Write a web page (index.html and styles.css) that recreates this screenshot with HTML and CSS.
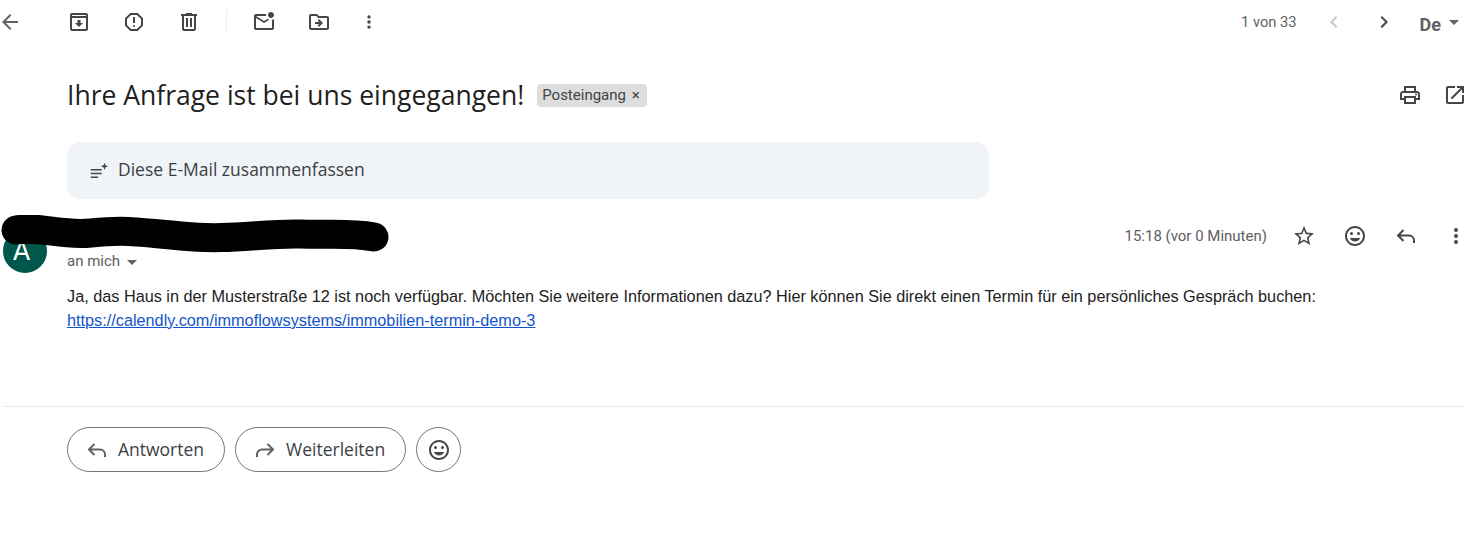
FILE: index.html
```html
<!DOCTYPE html>
<html lang="de">
<head>
  <title>Ihre Anfrage ist bei uns eingegangen!</title>
  <meta charset="UTF-8">
  <meta name="viewport" content="width=device-width, initial-scale=1.0">
  <link rel="stylesheet" href="styles.css">
</head>
<body>
  <div class="toolbar">
    <svg class="icon back-icon" viewBox="0 0 24 24"><path d="M20 11H7.83l5.59-5.59L12 4l-8 8 8 8 1.41-1.41L7.83 13H20v-2z"/></svg>
    <div class="tool-group">
      <svg class="icon" viewBox="0 0 24 24"><path d="M5 3h14a2 2 0 0 1 2 2v14a2 2 0 0 1-2 2H5a2 2 0 0 1-2-2V5a2 2 0 0 1 2-2zm0 5v11h14V8H5zm0-3v1h14V5H5zm5.5 5h3v3H16l-4 4-4-4h2.5v-3z"/></svg>
      <svg class="icon" viewBox="0 0 24 24"><path d="M15.73 3H8.27L3 8.27v7.46L8.27 21h7.46L21 15.73V8.27L15.73 3zM19 14.9L14.9 19H9.1L5 14.9V9.1L9.1 5h5.8L19 9.1v5.8z"/><path d="M11 7h2v6h-2z"/><circle cx="12" cy="16" r="1"/></svg>
      <svg class="icon" viewBox="0 0 24 24"><path d="M15 4V3H9v1H4v2h1v13c0 1.1.9 2 2 2h10c1.1 0 2-.9 2-2V6h1V4h-5zm2 15H7V6h10v13zM9 8h2v9H9zm4 0h2v9h-2z"/></svg>
    </div>
    <div class="tool-divider"></div>
    <div class="tool-group">
      <svg class="icon" viewBox="0 0 24 24"><path d="M22 8.98V18c0 1.1-.9 2-2 2H4c-1.1 0-2-.9-2-2V6c0-1.1.9-2 2-2h10.1c-.06.32-.1.66-.1 1s.04.68.1 1H4l8 5 3.67-2.29c.47.43 1.02.76 1.63.98L12 13 4 8v10h16V9.9c.74-.15 1.42-.48 2-.92zM16 5c0 1.66 1.34 3 3 3s3-1.34 3-3-1.34-3-3-3-3 1.34-3 3z"/></svg>
      <svg class="icon" viewBox="0 0 24 24"><path d="M20 6h-8l-2-2H4c-1.1 0-1.99.9-1.99 2L2 18c0 1.1.9 2 2 2h16c1.1 0 2-.9 2-2V8c0-1.1-.9-2-2-2zm0 12H4V6h5.17l2 2H20v10zm-8.01-9l-1.41 1.41L12.16 12H8v2h4.16l-1.59 1.59L11.99 17 16 13.01 11.99 9z"/></svg>
      <svg class="icon more-icon" viewBox="0 0 24 24"><circle cx="12" cy="6" r="2"/><circle cx="12" cy="12" r="2"/><circle cx="12" cy="18" r="2"/></svg>
    </div>
    <div class="pager">
      <span class="pager-count">1 von 33</span>
      <svg class="icon chevron disabled" viewBox="0 0 24 24"><path d="M15.41 7.41L14 6l-6 6 6 6 1.41-1.41L10.83 12z"/></svg>
      <svg class="icon chevron" viewBox="0 0 24 24"><path d="M10 6L8.59 7.41 13.17 12l-4.58 4.59L10 18l6-6z"/></svg>
      <span class="lang">De</span>
      <span class="caret lang-caret"></span>
    </div>
  </div>

  <div class="subject-row">
    <h1 class="subject">Ihre Anfrage ist bei uns eingegangen!</h1>
    <span class="label-chip">Posteingang <span class="chip-close">×</span></span>
    <div class="subject-actions">
      <svg class="icon" viewBox="0 0 24 24"><path d="M19 8h-1V3H6v5H5c-1.66 0-3 1.34-3 3v6h4v4h12v-4h4v-6c0-1.66-1.34-3-3-3zM8 5h8v3H8V5zm8 14H8v-4h8v4zm2-4v-2H6v2H4v-4c0-.55.45-1 1-1h14c.55 0 1 .45 1 1v4h-2z"/><circle cx="18" cy="11.5" r="1"/></svg>
      <svg class="icon" viewBox="0 0 24 24"><path d="M19 19H5V5h7V3H5c-1.11 0-2 .9-2 2v14c0 1.1.89 2 2 2h14c1.1 0 2-.9 2-2v-7h-2v7zM14 3v2h3.59l-9.83 9.83 1.41 1.41L19 6.41V10h2V3h-7z"/></svg>
    </div>
  </div>

  <div class="summary-bar">
    <svg class="icon summary-icon" viewBox="0 0 24 24"><path d="M3 11h12v1.6H3zM3 15h12v1.6H3zM3 19h8v1.6H3z"/><path d="M18 4l1.1 2.9L22 8l-2.9 1.1L18 12l-1.1-2.9L14 8l2.9-1.1z"/></svg>
    <span class="summary-text">Diese E-Mail zusammenfassen</span>
  </div>

  <div class="message">
    <div class="avatar">A</div>
    <div class="message-main">
      <div class="message-head">
        <div class="recipient">an mich <span class="caret"></span></div>
        <div class="message-meta">
          <span class="message-time">15:18 (vor 0 Minuten)</span>
          <svg class="icon meta-icon" viewBox="0 0 24 24"><path d="M22 9.24l-7.19-.62L12 2 9.19 8.63 2 9.24l5.46 4.73L5.82 21 12 17.27 18.18 21l-1.63-7.03L22 9.24zM12 15.4l-3.76 2.27 1-4.28-3.32-2.88 4.38-.38L12 6.1l1.71 4.04 4.38.38-3.32 2.88 1 4.28L12 15.4z"/></svg>
          <svg class="icon meta-icon" viewBox="0 0 24 24"><path d="M11.99 2C6.47 2 2 6.48 2 12s4.47 10 9.99 10C17.52 22 22 17.52 22 12S17.52 2 11.99 2zM12 20c-4.42 0-8-3.58-8-8s3.58-8 8-8 8 3.58 8 8-3.58 8-8 8z"/><circle cx="15.5" cy="9.5" r="1.5"/><circle cx="8.5" cy="9.5" r="1.5"/><path d="M12 17.5c2.33 0 4.3-1.46 5.11-3.5H6.89c.8 2.04 2.78 3.5 5.11 3.5z"/></svg>
          <svg class="icon meta-icon line-icon" viewBox="0 0 24 24"><path d="M9.5 6L4 11.5 9.5 17M4 11.5h11a5 5 0 0 1 5 5V19"/></svg>
          <svg class="icon meta-icon meta-more" viewBox="0 0 24 24"><circle cx="12" cy="6" r="2"/><circle cx="12" cy="12" r="2"/><circle cx="12" cy="18" r="2"/></svg>
        </div>
      </div>
      <div class="message-body">
        Ja, das Haus in der Musterstraße 12 ist noch verfügbar. Möchten Sie weitere Informationen dazu? Hier können Sie direkt einen Termin für ein persönliches Gespräch buchen:<br>
        <a href="#">https://calendly.com/immoflowsystems/immobilien-termin-demo-3</a>
      </div>
    </div>
    <!-- black scribble over the sender name -->
    <svg class="scribble" viewBox="0 0 392 40"><path d="M15 15C40 11 60 21 90 18S130 16 180 21 260 18 300 19 350 18 373 22"/></svg>
  </div>

  <div class="message-end"></div>

  <div class="reply-row">
    <button class="pill-btn">
      <svg class="icon line-icon" viewBox="0 0 24 24"><path d="M9.5 6L4 11.5 9.5 17M4 11.5h11a5 5 0 0 1 5 5V19"/></svg>
      <span class="btn-text">Antworten</span>
    </button>
    <button class="pill-btn">
      <svg class="icon line-icon" viewBox="0 0 24 24"><path d="M14.5 6L20 11.5 14.5 17M20 11.5H9a5 5 0 0 0-5 5V19"/></svg>
      <span class="btn-text">Weiterleiten</span>
    </button>
    <button class="round-btn">
      <svg class="icon" viewBox="0 0 24 24"><path d="M11.99 2C6.47 2 2 6.48 2 12s4.47 10 9.99 10C17.52 22 22 17.52 22 12S17.52 2 11.99 2zM12 20c-4.42 0-8-3.58-8-8s3.58-8 8-8 8 3.58 8 8-3.58 8-8 8z"/><circle cx="15.5" cy="9.5" r="1.5"/><circle cx="8.5" cy="9.5" r="1.5"/><path d="M12 17.5c2.33 0 4.3-1.46 5.11-3.5H6.89c.8 2.04 2.78 3.5 5.11 3.5z"/></svg>
    </button>
  </div>
</body>
</html>
```

FILE: styles.css
```css
body {
  margin: 0;
  font-family: Roboto, 'Liberation Sans', sans-serif;
  color: #1f1f1f;
  background-color: #fff;
  overflow: hidden;
}

.icon {
  display: block;
  flex: none;
  width: 24px;
  height: 24px;
  fill: #444746;
}

.line-icon {
  fill: none;
  stroke: #444746;
  stroke-width: 2;
}

/* top toolbar */
.toolbar {
  display: flex;
  align-items: center;
  height: 44px;
  padding-right: 25px;
}

.back-icon {
  margin-left: -2px;
  margin-right: 45px;
  fill: #5f6368;
}

.tool-group {
  display: flex;
  align-items: center;
  gap: 31px;
}

.more-icon {
  margin-left: -5px;
  transform: scale(0.85);
}

.tool-divider {
  width: 1px;
  height: 26px;
  margin: 0 25px;
  background-color: #eee;
}

.pager {
  display: flex;
  align-items: center;
  margin-left: auto;
}

.pager-count {
  margin-right: 25px;
  font-size: 14.7px;
  color: #5f6368;
}

.chevron {
  margin-right: 26px;
  fill: #444746;
}

.chevron.disabled {
  fill: #c4c7c5;
}

.lang {
  margin-left: -2px;
  padding-top: 4px;
  font-size: 18px;
  font-weight: 700;
  color: #5f6368;
}

.caret {
  display: inline-block;
  border-left: 5px solid transparent;
  border-right: 5px solid transparent;
  border-top: 5px solid #5f6368;
}

.lang-caret {
  margin-left: 8px;
}

/* subject */
.subject-row {
  display: flex;
  align-items: center;
  height: 94px;
  padding: 4px 17px 0 67px;
}

.subject {
  margin: 0;
  font-family: 'Open Sans', sans-serif;
  font-size: 26.5px;
  font-weight: 400;
}

.label-chip {
  margin-left: 13px;
  padding: 3px 7px 3px 5px;
  border-radius: 4px;
  font-size: 15px;
  line-height: 17px;
  color: #444;
  background-color: #ddd;
}

.chip-close {
  margin-left: 2px;
}

.subject-actions {
  display: flex;
  gap: 21px;
  margin-left: auto;
}

/* summarize bar */
.summary-bar {
  display: flex;
  align-items: center;
  gap: 8px;
  box-sizing: border-box;
  width: 922px;
  height: 57px;
  margin-left: 67px;
  padding-left: 21px;
  border-radius: 14px;
  font-family: 'Open Sans', sans-serif;
  font-size: 17.5px;
  font-weight: 500;
  color: #3c4043;
  background-color: #f0f4f9;
}

.summary-icon {
  width: 22px;
  height: 22px;
  margin-bottom: 2px;
}

.summary-text {
  padding-bottom: 4px;
}

/* message */
.message {
  position: relative;
  display: flex;
  margin-top: 30px;
}

.avatar {
  flex: none;
  box-sizing: border-box;
  width: 44px;
  height: 44px;
  margin-left: 3px;
  padding-right: 7px;
  border-radius: 50%;
  font-size: 27px;
  line-height: 44px;
  text-align: center;
  color: #fff;
  background-color: #00574b;
}

.message-main {
  flex: 1;
  margin-left: 20px;
  padding-right: 16px;
}

.message-head {
  display: flex;
  justify-content: space-between;
  height: 55px;
}

.recipient {
  padding-top: 23px;
  font-size: 15px;
  color: #5e5e5e;
}

.recipient .caret {
  margin-left: 3px;
  vertical-align: 1px;
}

.message-meta {
  display: flex;
  align-items: center;
  gap: 27px;
  height: 14px;
}

.meta-more {
  margin-left: -1px;
}

.message-time {
  margin-right: -2px;
  font-size: 15px;
  color: #5e5e5e;
}

.message-body {
  font-family: 'Liberation Sans', sans-serif;
  font-size: 16.25px;
  line-height: 24px;
  color: #222;
}

.message-body a {
  color: #1155cc;
}

.scribble {
  position: absolute;
  left: 1px;
  top: -14px;
  width: 392px;
  height: 40px;
  fill: none;
  stroke: #000;
  stroke-width: 29;
  stroke-linecap: round;
  stroke-linejoin: round;
}

.message-end {
  height: 1px;
  margin: 74px 19px 0 4px;
  background-color: #e8e8e8;
}

/* reply buttons */
.reply-row {
  display: flex;
  gap: 10px;
  margin: 20px 0 0 67px;
}

.pill-btn,
.round-btn {
  display: flex;
  align-items: center;
  justify-content: center;
  height: 45px;
  padding: 0;
  border: 1px solid #747775;
  background-color: #fff;
  font-family: 'Open Sans', sans-serif;
  font-size: 17.5px;
  font-weight: 500;
  color: #3c4043;
}

.pill-btn {
  gap: 9px;
  border-radius: 23px;
  padding: 0 20px 0 17px;
}

.pill-btn .line-icon {
  stroke: #5f6368;
}

.btn-text {
  padding-bottom: 2px;
}

.round-btn {
  width: 45px;
  border-radius: 50%;
}
```
